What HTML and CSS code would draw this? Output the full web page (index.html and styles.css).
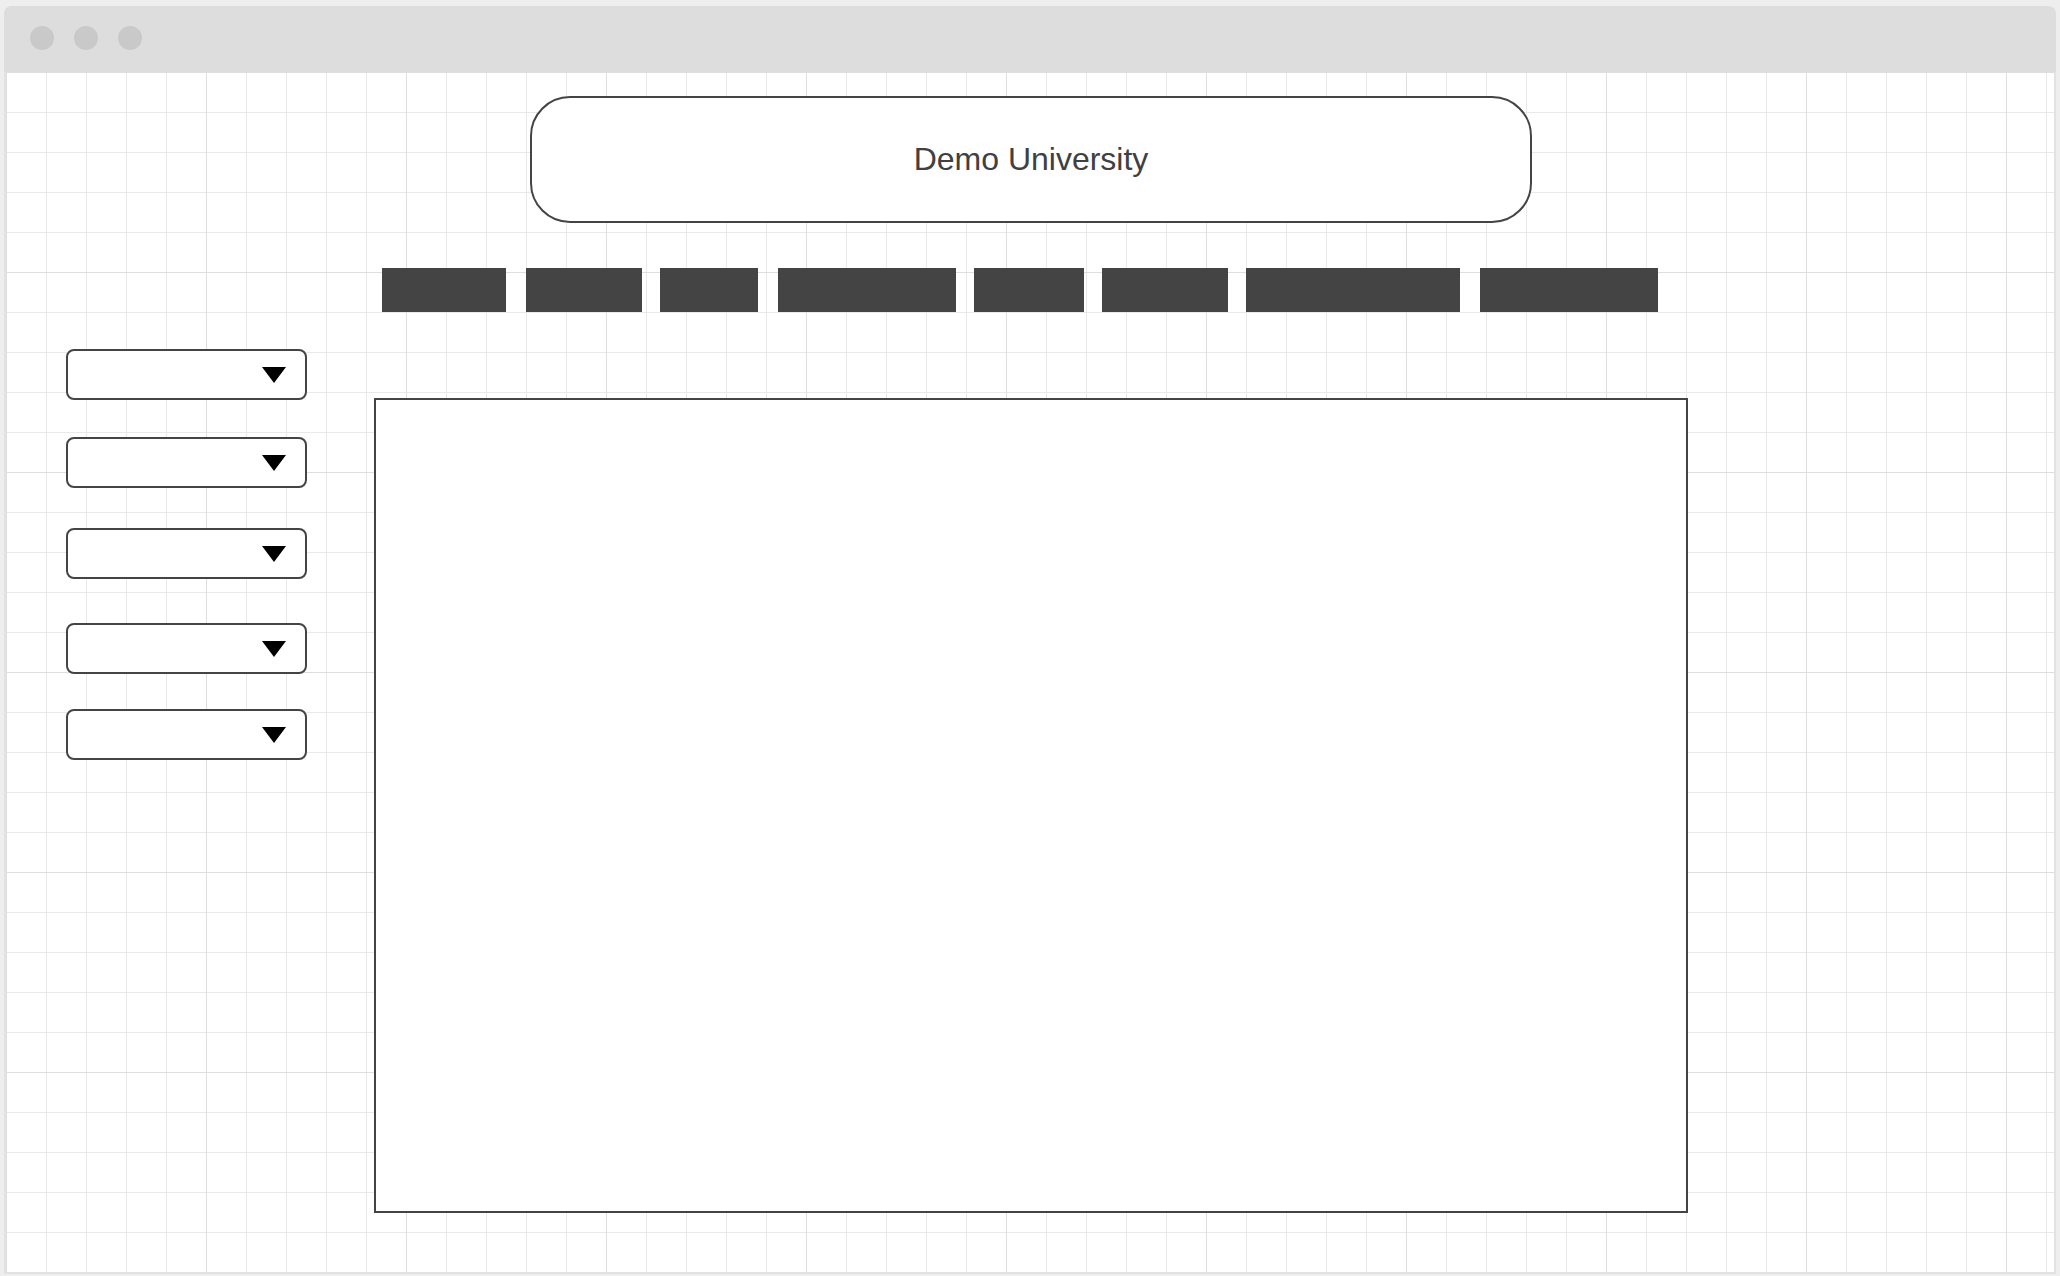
FILE: index.html
```html
<!DOCTYPE html>
<html lang="en">
<head>
<meta charset="utf-8">
<title>Demo University</title>
<link rel="stylesheet" href="styles.css">
</head>
<body>
<div class="window">
  <div class="titlebar">
    <span class="dot"></span>
    <span class="dot"></span>
    <span class="dot"></span>
  </div>
  <div class="canvas">
    <header class="brand">Demo University</header>
    <nav class="nav">
      <span class="nav-item w124"></span>
      <span class="nav-item w116 gap20"></span>
      <span class="nav-item w98 gap18"></span>
      <span class="nav-item w178 gap20"></span>
      <span class="nav-item w110 gap18"></span>
      <span class="nav-item w126 gap18"></span>
      <span class="nav-item w214 gap18"></span>
      <span class="nav-item w178 gap20"></span>
    </nav>
    <div class="body-row">
      <aside class="sidebar">
        <div class="dropdown"><span class="caret"></span></div>
        <div class="dropdown"><span class="caret"></span></div>
        <div class="dropdown"><span class="caret"></span></div>
        <div class="dropdown"><span class="caret"></span></div>
        <div class="dropdown"><span class="caret"></span></div>
      </aside>
      <main class="main-panel"></main>
    </div>
  </div>
</div>
</body>
</html>
```

FILE: styles.css
```css
* {
  box-sizing: border-box;
}

html, body {
  margin: 0;
  padding: 0;
}

body {
  width: 2060px;
  height: 1276px;
  background: #eeeeee;
  font-family: "Liberation Sans", Arial, sans-serif;
  overflow: hidden;
}

.window {
  width: 2052px;
  height: 1268px;
  margin: 6px 0 0 4px;
  background: #e2e2e2;
  border-radius: 8px 8px 0 0;
  display: flex;
  flex-direction: column;
  overflow: hidden;
}

.titlebar {
  height: 66px;
  flex: none;
  background: #dddddd;
  display: flex;
  align-items: center;
  gap: 20px;
  padding-left: 26px;
  padding-bottom: 2px;
}

.dot {
  width: 24px;
  height: 24px;
  border-radius: 50%;
  background: #c9c9c9;
}

.canvas {
  height: 1200px;
  margin: 0 2px;
  background-color: #ffffff;
  background-image:
    linear-gradient(to right, #dedede 1px, transparent 1px),
    linear-gradient(to bottom, #dedede 1px, transparent 1px),
    linear-gradient(to right, #e9e9e9 1px, transparent 1px),
    linear-gradient(to bottom, #e9e9e9 1px, transparent 1px);
  background-size: 200px 200px, 200px 200px, 40px 40px, 40px 40px;
  background-position: 0 0, 0 0, 0 0, 0 0;
  padding-top: 24px;
}

.brand {
  width: 1002px;
  height: 127px;
  margin-left: 524px;
  border: 2px solid #444444;
  border-radius: 40px;
  background: #ffffff;
  display: flex;
  align-items: center;
  justify-content: center;
  font-size: 32px;
  color: #404040;
}

.nav {
  display: flex;
  margin-top: 45px;
  padding-left: 376px;
  height: 44px;
}

.nav-item {
  display: block;
  height: 44px;
  background: #444444;
}

.gap18 { margin-left: 18px; }
.gap20 { margin-left: 20px; }

.w98 { width: 98px; }
.w110 { width: 110px; }
.w116 { width: 116px; }
.w124 { width: 124px; }
.w126 { width: 126px; }
.w178 { width: 178px; }
.w214 { width: 214px; }

.body-row {
  display: flex;
  align-items: flex-start;
  margin-top: 37px;
}

.sidebar {
  width: 241px;
  margin-left: 60px;
  display: flex;
  flex-direction: column;
}

.dropdown {
  width: 241px;
  height: 51px;
  border: 2px solid #444444;
  border-radius: 8px;
  background: #ffffff;
  display: flex;
  align-items: center;
  justify-content: flex-end;
  padding-right: 19px;
}

.dropdown:nth-child(2) { margin-top: 37px; }
.dropdown:nth-child(3) { margin-top: 40px; }
.dropdown:nth-child(4) { margin-top: 44px; }
.dropdown:nth-child(5) { margin-top: 35px; }

.caret {
  width: 0;
  height: 0;
  border-left: 12px solid transparent;
  border-right: 12px solid transparent;
  border-top: 16px solid #000000;
}

.main-panel {
  width: 1314px;
  height: 815px;
  margin-left: 67px;
  margin-top: 49px;
  border: 2px solid #444444;
  background: #ffffff;
}
```
